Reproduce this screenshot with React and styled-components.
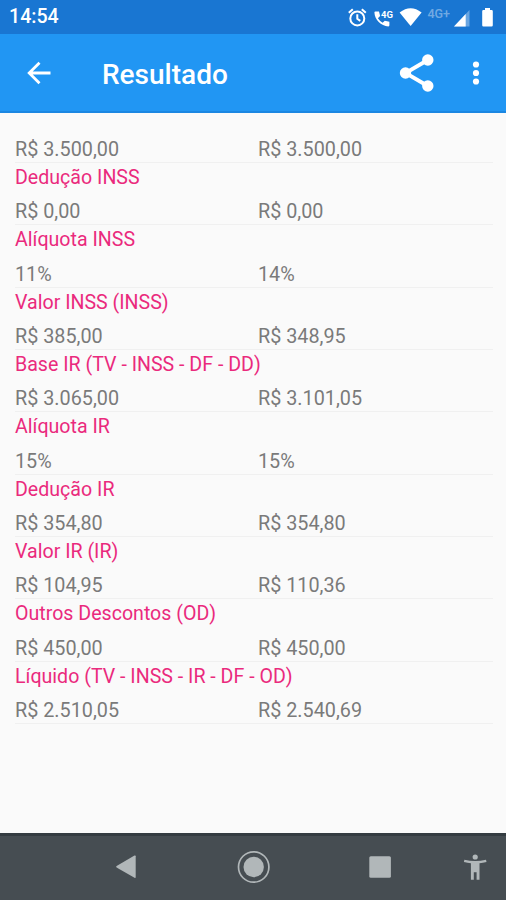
import React from "react";
import styled, { createGlobalStyle } from "styled-components";

const results = [
  { values: ["R$ 3.500,00", "R$ 3.500,00"] },
  { label: "Dedução INSS", values: ["R$ 0,00", "R$ 0,00"] },
  { label: "Alíquota INSS", values: ["11%", "14%"] },
  { label: "Valor INSS (INSS)", values: ["R$ 385,00", "R$ 348,95"] },
  { label: "Base IR (TV - INSS - DF - DD)", values: ["R$ 3.065,00", "R$ 3.101,05"] },
  { label: "Alíquota IR", values: ["15%", "15%"] },
  { label: "Dedução IR", values: ["R$ 354,80", "R$ 354,80"] },
  { label: "Valor IR (IR)", values: ["R$ 104,95", "R$ 110,36"] },
  { label: "Outros Descontos (OD)", values: ["R$ 450,00", "R$ 450,00"] },
  { label: "Líquido (TV - INSS - IR - DF - OD)", values: ["R$ 2.510,05", "R$ 2.540,69"] },
];

function StatusIcons() {
  return (
    <StatusSvg width="160" height="34" viewBox="346 0 160 34">
      {/* alarm */}
      <g fill="none" stroke="#fff" strokeWidth="2">
        <circle cx="357.3" cy="18.4" r="7" />
        <path d="M357.3 14.2v4.6l3 2M348.8 12.8l4-3.6M365.8 12.8l-4-3.6" />
      </g>
      {/* phone */}
      <path
        fill="#fff"
        d="M375.4 11.6h3.6l1.1 4.5-2.2 2.2a14 14 0 0 0 4.7 4.5l2.2-2.1 4.6 1v3.6q0 1-1 1.1c-7.5-.4-13.6-6.2-14-13.8q0-.9 1-1z"
      />
      <SmallNetwork x="381" y="17.5">4G</SmallNetwork>
      {/* wifi */}
      <path fill="#fff" d="M399.6 12.5q11-8.5 22 0L410.6 26z" />
      <Network x="427.5" y="18">4G+</Network>
      {/* signal */}
      <path fill="#fff" fillOpacity=".35" d="M454 26.5L469.5 10v16.5z" />
      <path fill="#fff" d="M454 26.5L465.7 14v12.5z" />
      {/* battery */}
      <path
        fill="#fff"
        d="M485 8h5v2h1.6q1.200 0 1.200 1.200v14.100q0 1.200-1.200 1.200h-8.200q-1.200 0-1.200-1.200V11.200q0-1.200 1.200-1.200h1.600z"
      />
    </StatusSvg>
  );
}

function App() {
  return (
    <Screen>
      <GlobalStyle />
      <StatusBar>
        <Clock>14:54</Clock>
        <StatusIcons />
      </StatusBar>

      <AppBar>
        <IconButton aria-label="Voltar">
          <svg width="26" height="26" viewBox="0 0 26 26" fill="none" stroke="#fff" strokeWidth="2.8">
            <path d="M25.5 13H4.500M14.500 2.700L4.200 13l10.300 10.300" />
          </svg>
        </IconButton>
        <Title>Resultado</Title>
        <ShareButton aria-label="Compartilhar">
          <svg width="36" height="40" viewBox="0 0 36 40" fill="#fff">
            <path d="M28.800 7L6.500 20l22.300 13" fill="none" stroke="#fff" strokeWidth="3.800" />
            <circle cx="28.800" cy="7" r="5.700" />
            <circle cx="6.500" cy="20" r="5.700" />
            <circle cx="28.800" cy="33" r="5.700" />
          </svg>
        </ShareButton>
        <MenuButton aria-label="Menu">
          <svg width="8" height="26" viewBox="0 0 8 26" fill="#fff">
            <circle cx="4" cy="4.500" r="3.100" />
            <circle cx="4" cy="13" r="3.100" />
            <circle cx="4" cy="21.500" r="3.100" />
          </svg>
        </MenuButton>
      </AppBar>

      <Content>
        {results.map((item, index) => (
          <Item key={index}>
            {item.label && <Label>{item.label}</Label>}
            <Values>
              {item.values.map((value, i) => (
                <Value key={i}>{value}</Value>
              ))}
            </Values>
          </Item>
        ))}
      </Content>

      <NavBar>
        <svg width="506" height="64" viewBox="0 836 506 64" fill="#b1b7b9">
          <path d="M116.600 866.100L134.500 855.600q1.200-.6 1.200.7v20.800q0 1.300-1.200.7L116.600 867.500q-1.100-.7 0-1.400z" />
          <circle cx="253.700" cy="867" r="10.200" />
          <circle cx="253.700" cy="867" r="15.200" fill="none" stroke="#b1b7b9" strokeWidth="1.700" />
          <rect x="369.300" y="856.200" width="21.600" height="21.600" rx="1.500" />
          <circle cx="475.200" cy="857" r="2.600" />
          <path d="M464.400 859.700q10.800 2.400 21.600 0l.5 2.300q-3.700.9-7 1.200v16.600h-2.900v-7.500h-2.800v7.500h-2.900v-16.600q-3.300-.3-7-1.200z" />
        </svg>
      </NavBar>
    </Screen>
  );
}

const GlobalStyle = createGlobalStyle`
  * {
    box-sizing: border-box;
  }

  body {
    margin: 0;
    background: #fafafa;
    font-family: Roboto, sans-serif;
  }
`;

const Screen = styled.div`
  display: flex;
  flex-direction: column;
  width: 506px;
  height: 900px;
  overflow: hidden;
  background: #fafafa;
`;

const StatusBar = styled.header`
  display: flex;
  justify-content: space-between;
  flex: 0 0 34px;
  background: #1976d2;
  color: #fff;
`;

const Clock = styled.span`
  padding-left: 9px;
  font-size: 19.6px;
  font-weight: 500;
  line-height: 34px;
`;

const StatusSvg = styled.svg`
  display: block;
`;

const Network = styled.text`
  fill: rgba(255, 255, 255, 0.4);
  font-family: Roboto, sans-serif;
  font-size: 12.5px;
  font-weight: 500;
`;

const SmallNetwork = styled(Network)`
  fill: #fff;
  font-size: 9.5px;
  font-weight: 700;
`;

const AppBar = styled.div`
  display: flex;
  align-items: center;
  flex: 0 0 79px;
  padding-left: 25px;
  background: #2196f3;
  border-bottom: 2px solid #1b87e2;
`;

const IconButton = styled.button`
  display: flex;
  padding: 0;
  border: none;
  background: none;
`;

const Title = styled.h1`
  flex: 1;
  margin: 4px 0 0 51px;
  color: #fff;
  font-size: 28px;
  font-weight: 500;
  line-height: 36px;
`;

const ShareButton = styled(IconButton)`
  margin-right: 37px;
`;

const MenuButton = styled(IconButton)`
  margin-right: 26px;
`;

const Content = styled.main`
  flex: 1;
  padding: 22px 13px 0 15px;
`;

const Item = styled.section`
  border-bottom: 1px solid #f0f0f0;
`;

const Label = styled.div`
  height: 34.35px;
  color: #ea2a7d;
  font-size: 19.6px;
  line-height: 29px;
  white-space: nowrap;
`;

const Values = styled.div`
  display: grid;
  grid-template-columns: 1fr 1fr;
  column-gap: 8px;
`;

const Value = styled.span`
  height: 27px;
  color: #7a7a7a;
  font-size: 19.8px;
  line-height: 29px;
`;

const NavBar = styled.nav`
  flex: 0 0 67px;
  background: #464d52;
  border-top: 3px solid #343c41;

  svg {
    display: block;
  }
`;

export default App;
